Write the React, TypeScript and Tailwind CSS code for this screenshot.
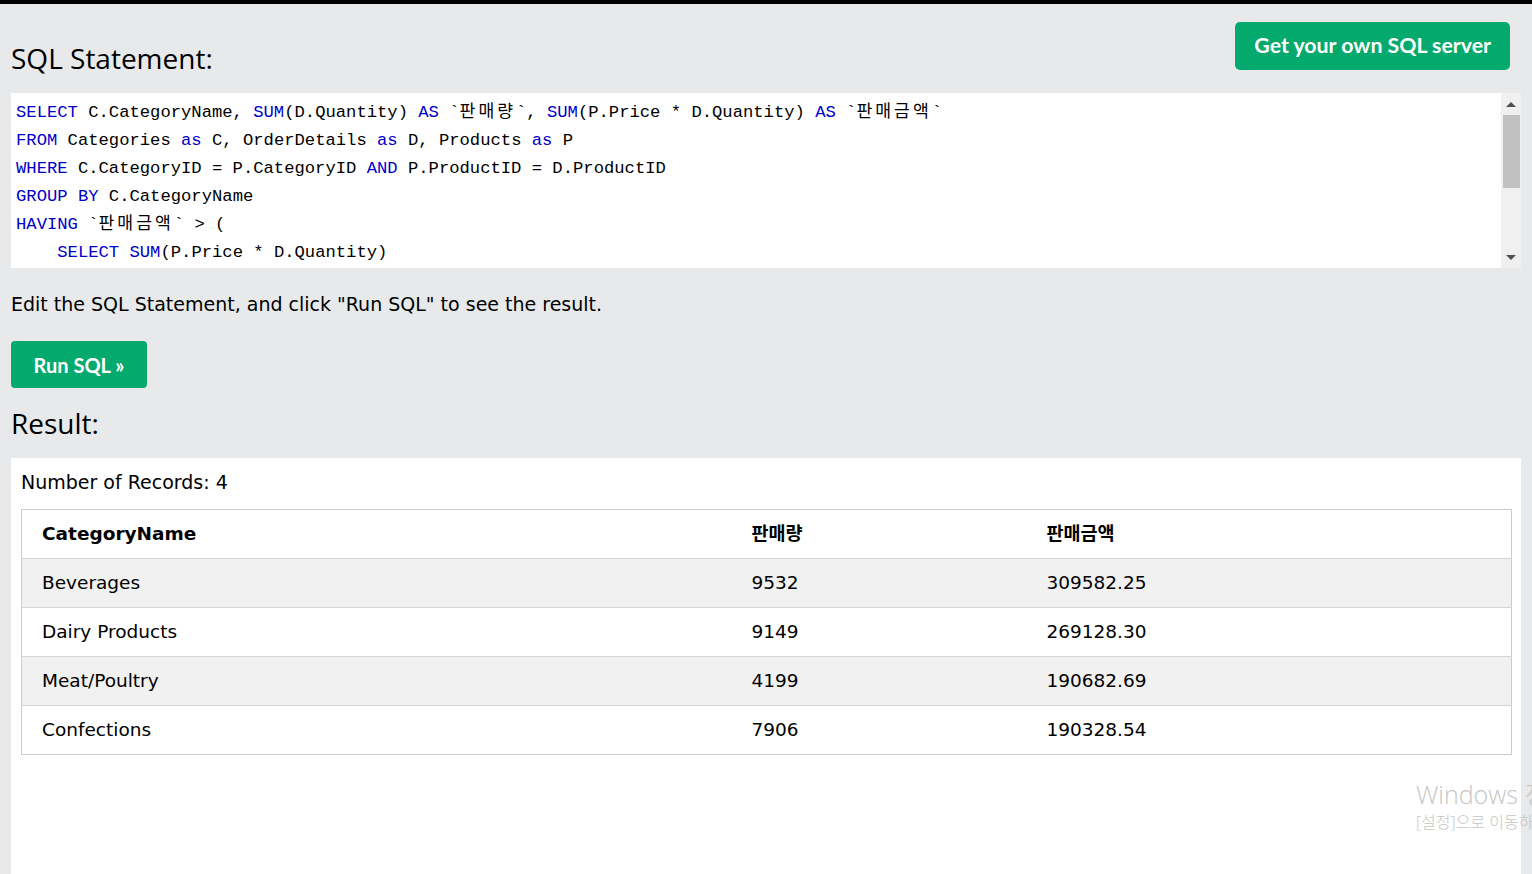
import React from "react"

type Row = { name: string; qty: string; amount: string }

const rows: Row[] = [
  { name: "Beverages", qty: "9532", amount: "309582.25" },
  { name: "Dairy Products", qty: "9149", amount: "269128.30" },
  { name: "Meat/Poultry", qty: "4199", amount: "190682.69" },
  { name: "Confections", qty: "7906", amount: "190328.54" },
]

const K = ({ children }: { children: React.ReactNode }) => (
  <span className="text-[#0000cd]">{children}</span>
)

const Ko = ({ children }: { children: React.ReactNode }) => (
  <span className="tracking-[3px]">{children}</span>
)

function CodeBox() {
  return (
    <div className="mt-[15px] flex h-[175px] overflow-hidden bg-white">
      <pre className="flex-1 pl-[5px] pt-[6px] font-['Liberation_Mono','Noto_Sans_CJK_KR',monospace] text-[17.2px] leading-[28px] text-black">
        <div><K>SELECT</K> C.CategoryName, <K>SUM</K>(D.Quantity) <K>AS</K> `<Ko>판매량</Ko>`, <K>SUM</K>(P.Price * D.Quantity) <K>AS</K> `<Ko>판매금액</Ko>`</div>
        <div><K>FROM</K> Categories <K>as</K> C, OrderDetails <K>as</K> D, Products <K>as</K> P</div>
        <div><K>WHERE</K> C.CategoryID = P.CategoryID <K>AND</K> P.ProductID = D.ProductID</div>
        <div><K>GROUP</K> <K>BY</K> C.CategoryName</div>
        <div><K>HAVING</K> `<Ko>판매금액</Ko>` &gt; (</div>
        <div>    <K>SELECT</K> <K>SUM</K>(P.Price * D.Quantity)</div>
      </pre>
      <div className="flex w-[20px] flex-col items-center bg-[#f0f0f0]">
        <div className="flex h-[22px] items-center justify-center">
          <div className="h-0 w-0 border-x-[5px] border-b-[5px] border-x-transparent border-b-[#505050]" />
        </div>
        <div className="h-[73px] w-[17px] bg-[#c1c1c1]" />
        <div className="flex-1" />
        <div className="flex h-[22px] items-center justify-center">
          <div className="h-0 w-0 border-x-[5px] border-t-[5px] border-x-transparent border-t-[#505050]" />
        </div>
      </div>
    </div>
  )
}

function ResultTable() {
  return (
    <table className="mt-[15px] w-full table-fixed border-collapse border border-[#cccccc] font-['DejaVu_Sans','Noto_Sans_CJK_KR',sans-serif] text-[18.5px] text-black">
      <colgroup>
        <col className="w-[710px]" />
        <col className="w-[295px]" />
        <col />
      </colgroup>
      <thead>
        <tr className="h-[49px] bg-white">
          <th className="pl-[20px] text-left font-bold">CategoryName</th>
          <th className="pl-[20px] text-left font-bold">판매량</th>
          <th className="pl-[20px] text-left font-bold">판매금액</th>
        </tr>
      </thead>
      <tbody>
        {rows.map((r, i) => (
          <tr key={r.name} className={"h-[49px] border-t border-[#d5d5d5] " + (i % 2 === 0 ? "bg-[#f1f1f1]" : "bg-white")}>
            <td className="pl-[20px]">{r.name}</td>
            <td className="pl-[20px]">{r.qty}</td>
            <td className="pl-[20px]">{r.amount}</td>
          </tr>
        ))}
      </tbody>
    </table>
  )
}

export default function App() {
  return (
    <div className="relative min-h-screen overflow-hidden bg-[#e7e9eb]">
      <div className="h-[4px] bg-black" />
      <div className="px-[11px]">
        <div className="flex items-start justify-between">
          <h2 className="mt-[34px] font-['Open_Sans',sans-serif] text-[28px] leading-[40px] text-black">SQL Statement:</h2>
          <button className="mt-[18px] mr-[11px] h-[48px] rounded-[5px] bg-[#04aa6d] px-[19px] font-['Lato',sans-serif] text-[21.3px] font-bold text-white">
            Get your own SQL server
          </button>
        </div>
        <CodeBox />
        <p className="mt-[23px] font-['DejaVu_Sans',sans-serif] text-[19px] leading-[26px] text-black">
          Edit the SQL Statement, and click "Run SQL" to see the result.
        </p>
        <button className="mt-[24px] h-[47px] w-[136px] rounded-[4px] bg-[#04aa6d] font-['Lato',sans-serif] text-[20px] font-bold text-white">
          Run SQL »
        </button>
        <h2 className="mt-[15px] font-['Open_Sans',sans-serif] text-[28px] leading-[40px] text-black">Result:</h2>
        <div className="mt-[15px] h-[430px] bg-white pl-[10px] pr-[9px] pt-[12px]">
          <div className="font-['DejaVu_Sans',sans-serif] text-[19px] leading-[24px] text-black">Number of Records: 4</div>
          <ResultTable />
        </div>
      </div>
      <div className="pointer-events-none absolute left-[1416px] top-[778px] whitespace-nowrap font-['Open_Sans','Noto_Sans_CJK_KR',sans-serif] text-[#c6c6c6]">
        <div className="text-[25px] font-light leading-[32px]">Windows 정품 인증</div>
        <div className="text-[16px] font-light leading-[24px]">[설정]으로 이동하여 Windows를 정품 인증합니다.</div>
      </div>
    </div>
  )
}
